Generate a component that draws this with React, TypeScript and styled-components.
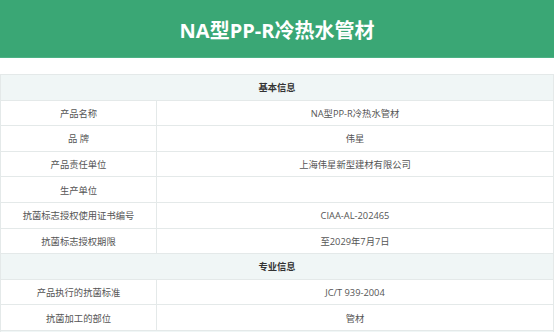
import React from "react";
import styled, { createGlobalStyle } from "styled-components";

const Global = createGlobalStyle`
  html, body { margin: 0; padding: 0; background: #ffffff; }
  body { font-family: "Open Sans", "Noto Sans CJK SC", sans-serif; }
`;

const Page = styled.div`
  width: 554px;
  display: flex;
  flex-direction: column;
`;

const Banner = styled.header`
  height: 58px;
  background: #3aa775;
  display: flex;
  align-items: center;
  justify-content: center;
  border-bottom: 1px solid #4cb285;
  box-sizing: border-box;
`;

const Title = styled.h1`
  margin: 0;
  padding-top: 2px;
  color: #ffffff;
  font-family: "Open Sans", "Noto Sans CJK SC", sans-serif;
  font-size: 20px;
  font-weight: 700;
  letter-spacing: 0;
`;

const Table = styled.div`
  margin-top: 16px;
  display: grid;
  grid-template-columns: 156px 1fr;
  grid-auto-rows: 25.6px;
  border-top: 1px solid #e4e9e9;
  border-left: 1px solid #e4e9e9;
  box-sizing: border-box;
`;

const Cell = styled.div<{ $section?: boolean }>`
  grid-column: ${(p) => (p.$section ? "1 / -1" : "auto")};
  display: flex;
  align-items: center;
  justify-content: center;
  box-sizing: border-box;
  border-right: 1px solid #e4e9e9;
  border-bottom: 1px solid #e4e9e9;
  background: ${(p) => (p.$section ? "#f0f6f6" : "#ffffff")};
  color: ${(p) => (p.$section ? "#333333" : "#555555")};
  font-weight: ${(p) => (p.$section ? 700 : 400)};
  font-size: 9.3px;
  font-family: "Open Sans", "Noto Sans CJK SC", sans-serif;
  white-space: nowrap;
`;

type Row = { section: string } | { label: string; value: string };

const rows: Row[] = [
  { section: "基本信息" },
  { label: "产品名称", value: "NA型PP-R冷热水管材" },
  { label: "品 牌", value: "伟星" },
  { label: "产品责任单位", value: "上海伟星新型建材有限公司" },
  { label: "生产单位", value: "" },
  { label: "抗菌标志授权使用证书编号", value: "CIAA-AL-202465" },
  { label: "抗菌标志授权期限", value: "至2029年7月7日" },
  { section: "专业信息" },
  { label: "产品执行的抗菌标准", value: "JC/T 939-2004" },
  { label: "抗菌加工的部位", value: "管材" },
  { section: "" },
];

export default function App() {
  return (
    <>
      <Global />
      <Page>
        <Banner>
          <Title>NA型PP-R冷热水管材</Title>
        </Banner>
        <Table>
          {rows.map((r, i) =>
            "section" in r ? (
              <Cell key={i} $section>
                {r.section}
              </Cell>
            ) : (
              <React.Fragment key={i}>
                <Cell>{r.label}</Cell>
                <Cell>{r.value}</Cell>
              </React.Fragment>
            )
          )}
        </Table>
      </Page>
    </>
  );
}
